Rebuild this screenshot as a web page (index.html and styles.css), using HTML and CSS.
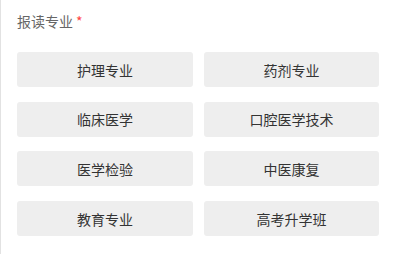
FILE: index.html
```html
<!DOCTYPE html>
<html lang="zh">
<head>
<meta charset="utf-8">
<link rel="stylesheet" href="styles.css">
</head>
<body>
<div class="panel">
  <div class="label">报读专业<span class="req">*</span></div>
  <div class="options">
    <div class="opt">护理专业</div>
    <div class="opt">药剂专业</div>
    <div class="opt">临床医学</div>
    <div class="opt">口腔医学技术</div>
    <div class="opt">医学检验</div>
    <div class="opt">中医康复</div>
    <div class="opt">教育专业</div>
    <div class="opt">高考升学班</div>
  </div>
</div>
</body>
</html>
```
FILE: styles.css
```css
html, body {
  margin: 0;
  padding: 0;
  background: #fff;
}
.panel {
  box-sizing: border-box;
  height: 254px;
  border-left: 1px solid #e2e2e2;
  padding: 11px 18px 0 16px;
  font-family: "Noto Sans CJK SC", "Noto Sans", sans-serif;
}
.label {
  font-size: 14px;
  line-height: 20px;
  color: #666;
}
.req {
  color: #f44;
  font-size: 14px;
  margin-left: 3px;
}
.options {
  margin-top: 21px;
  display: grid;
  grid-template-columns: 176px 175px;
  column-gap: 11px;
  row-gap: 14.7px;
}
.opt {
  height: 35px;
  background: #eeeeee;
  border-radius: 3px;
  display: flex;
  align-items: center;
  justify-content: center;
  font-size: 14px;
  color: #333;
}
```
